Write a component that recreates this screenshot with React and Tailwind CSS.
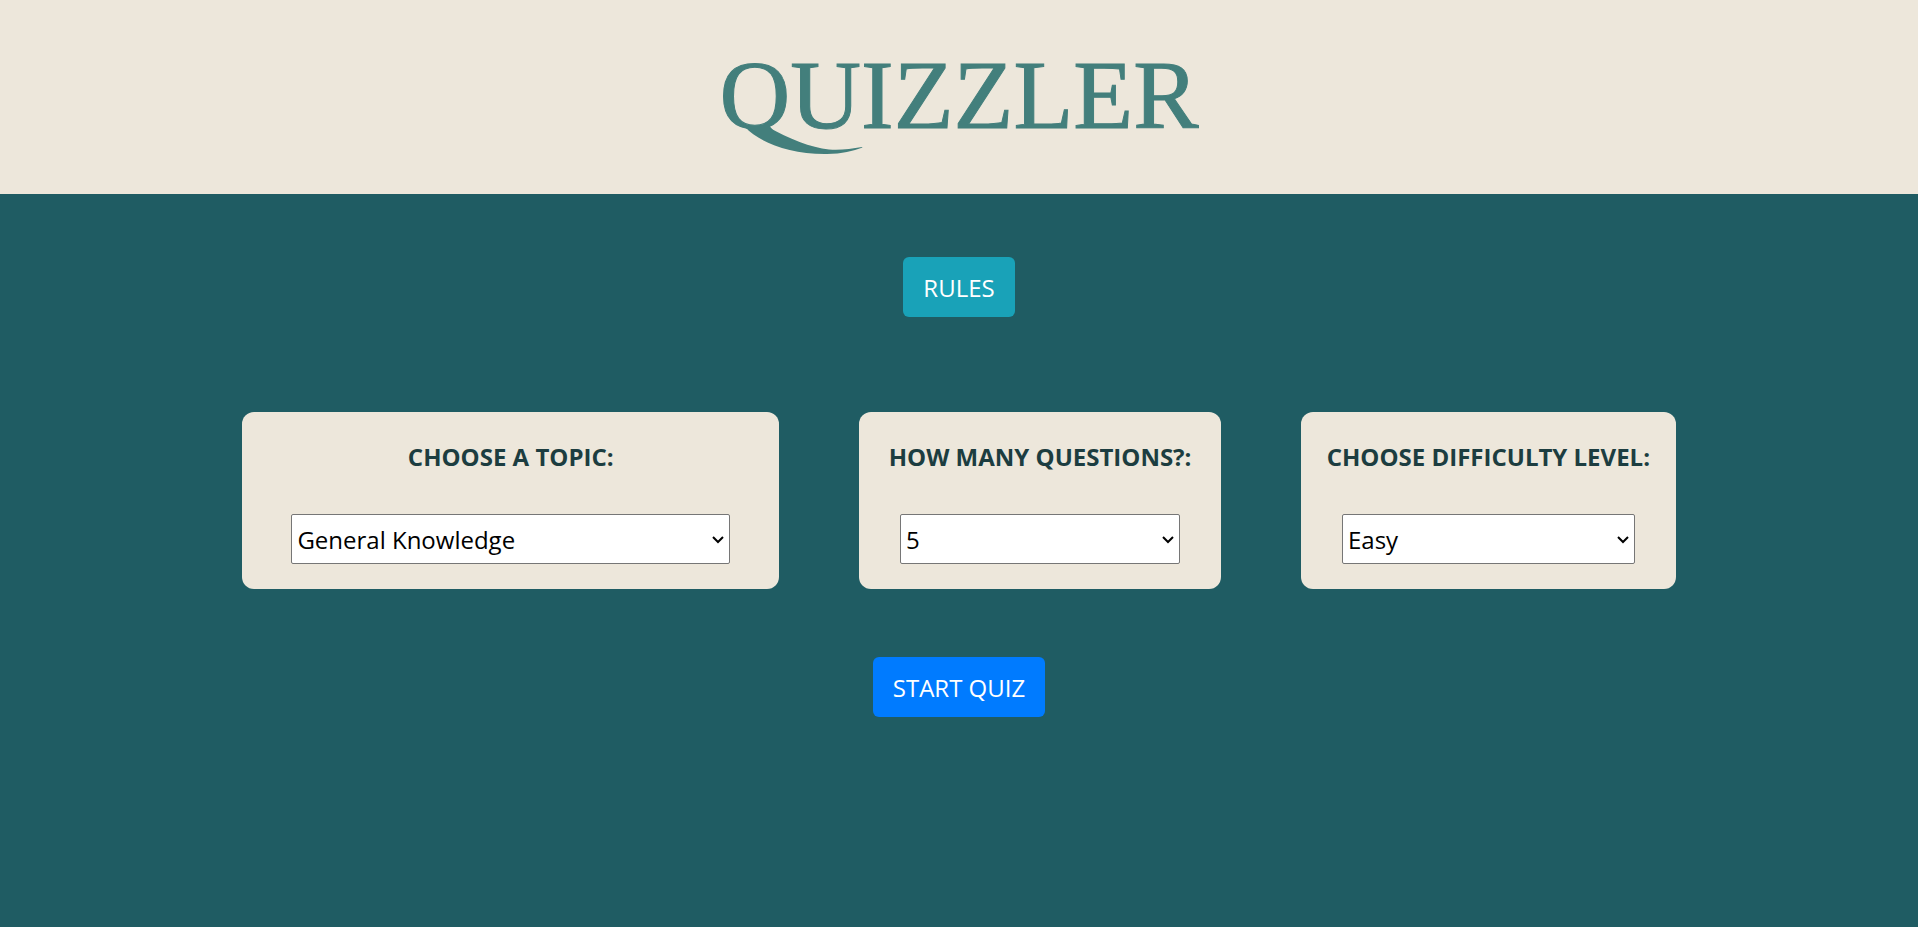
const BUTTON =
  "h-[60px] cursor-pointer rounded-md px-5 pt-px text-2xl text-white";

const TOPICS = [
  "General Knowledge",
  "Books",
  "Film",
  "Music",
  "Television",
  "Video Games",
  "Science & Nature",
  "Computers",
  "Mathematics",
  "Mythology",
  "Sports",
  "Geography",
  "History",
];

function Flourish() {
  return (
    <svg
      aria-hidden="true"
      viewBox="0 0 118 28"
      className="absolute top-20 left-[25px] h-7 w-[118px] fill-current"
    >
      <path d="M0 0 C14 15 44 27.500 82 27 C97 26.800 108 24 117.500 20.500 L117 20 C106 22 95 23.300 84 22.500 C66 20.500 44 12 23 0 Z" />
    </svg>
  );
}

function Card({ id, label, options }) {
  return (
    <div className="flex flex-col items-center rounded-xl bg-[#ede7db] px-[25px] pt-[29px] pb-[25px]">
      <label
        htmlFor={id}
        className="text-center text-2xl leading-8 font-bold whitespace-nowrap text-[#1c3d40]"
      >
        {label}
      </label>
      <div className="relative mt-[41px] w-9/10">
        <select
          id={id}
          className="h-[50px] w-full appearance-none rounded-xs border border-[#767676] bg-white pt-0.5 pr-7 pl-[5px] text-2xl text-black"
        >
          {options.map((option) => (
            <option key={option}>{option}</option>
          ))}
        </select>
        <svg
          aria-hidden="true"
          viewBox="0 0 12 8"
          className="pointer-events-none absolute top-[22px] right-[6px] h-2 w-3 fill-none stroke-black stroke-2"
        >
          <path d="M1 1 L6 6 L11 1" />
        </svg>
      </div>
    </div>
  );
}

export default function App() {
  return (
    <div className="flex min-h-screen flex-col bg-[#1f5c63] font-['Open_Sans',sans-serif]">
      <header className="flex justify-center bg-[#ede7db] px-4 pt-[47px] pb-[51px]">
        <h1 className="relative font-['Liberation_Serif',serif] text-[98px] leading-[96px] text-[#437f7c] [-webkit-text-stroke:1px_#437f7c]">
          QUIZZLER
          <Flourish />
        </h1>
      </header>
      <main className="flex flex-col items-center px-4 pt-[63px] pb-16">
        <button type="button" className={`${BUTTON} bg-[#19a2b8]`}>
          RULES
        </button>
        <form className="mt-[95px] flex w-full max-w-[1434px] flex-col items-center">
          <div className="grid w-full gap-20 lg:grid-cols-[537fr_361fr_375fr]">
            <Card id="topic" label="CHOOSE A TOPIC:" options={TOPICS} />
            <Card
              id="amount"
              label="HOW MANY QUESTIONS?:"
              options={["5", "10", "15", "20"]}
            />
            <Card
              id="difficulty"
              label="CHOOSE DIFFICULTY LEVEL:"
              options={["Easy", "Medium", "Hard"]}
            />
          </div>
          <button type="button" className={`${BUTTON} mt-[68px] bg-[#007bff]`}>
            START QUIZ
          </button>
        </form>
      </main>
    </div>
  );
}
